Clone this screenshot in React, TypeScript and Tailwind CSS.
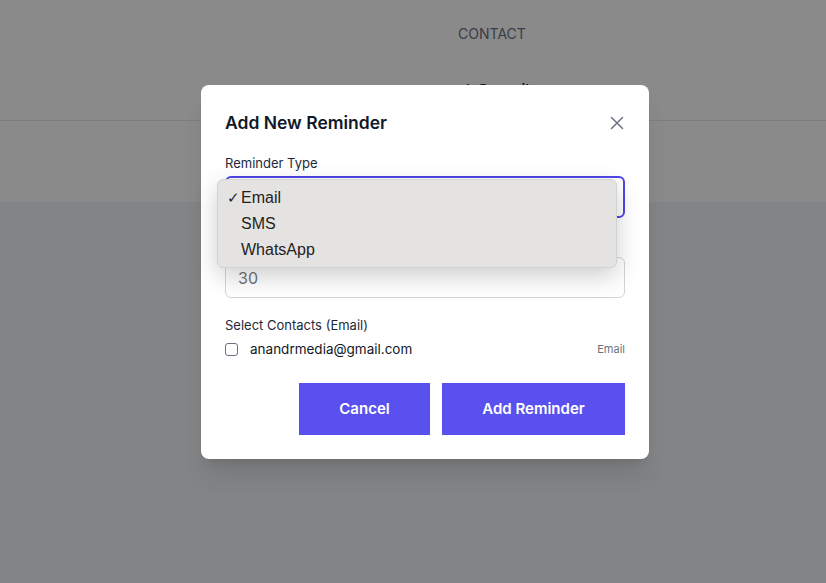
import React from 'react';

const font = { fontFamily: 'Inter, "Noto Sans", sans-serif' };

const App: React.FC = () => {
  return (
    <div className="relative w-[826px] h-[583px] overflow-hidden bg-gray-100" style={font}>
      {/* Underlying page */}
      <div className="bg-white">
        <div className="h-[121px] border-b border-gray-200 flex flex-col items-center">
          <div className="pt-[24px] pl-[158px] text-sm text-gray-500 uppercase">Contact</div>
          <div className="mt-[35px] pl-[164px] text-[15px] font-medium text-gray-900">anandr@gmail.com</div>
        </div>
        <div className="h-[81px]" />
      </div>

      {/* Overlay */}
      <div className="absolute inset-0 bg-black/[0.46] flex items-start justify-center pt-[85px] pl-[24px]">
        <div className="w-[448px] bg-white rounded-lg p-6 shadow-xl">
          {/* Header */}
          <div className="flex items-center justify-between mb-4">
            <h2 className="text-[17.5px] leading-7 font-semibold text-gray-900">Add New Reminder</h2>
            <button className="text-gray-500 w-4 h-4 flex items-center justify-center">
              <svg width="14" height="14" viewBox="0 0 14 14" fill="none" stroke="currentColor" strokeWidth="1.5" strokeLinecap="round">
                <path d="M1.5 1.5l11 11M12.5 1.5l-11 11" />
              </svg>
            </button>
          </div>

          {/* Reminder type */}
          <label className="block text-[13px] leading-5 text-gray-800 mb-[3px]">Reminder Type</label>
          <div className="relative mb-4">
            <div className="h-[42px] border-2 border-[#5046e5] rounded-md flex items-center justify-end px-3">
              <svg width="10" height="10" viewBox="0 0 10 10" fill="none" stroke="#555" strokeWidth="1.4">
                <path d="M1.5 3.5l3.5 3.5 3.5-3.5" />
              </svg>
            </div>
            {/* Native dropdown */}
            <div className="absolute left-[-8px] top-[3px] w-[400px] h-[89px] bg-[#e5e3e1] rounded-md border border-[#d4d2d0] shadow-[0_8px_24px_rgba(0,0,0,0.2)] py-[5px] text-base text-[#222]" style={{ fontFamily: '"Liberation Sans", Arial, sans-serif' }}>
              <div className="h-[26px] flex items-center relative pl-[23px]">
                <span className="absolute left-[9px] text-[15px]">✓</span>
                <span>Email</span>
              </div>
              <div className="h-[26px] flex items-center pl-[23px]">SMS</div>
              <div className="h-[26px] flex items-center pl-[23px]">WhatsApp</div>
            </div>
          </div>

          {/* Days before (label hidden behind the open dropdown) */}
          <div className="h-5 mb-[3px]" />
          <div className="h-[41px] border border-gray-300 rounded-md flex items-center px-3 text-base text-[#737373] mb-[17px]">
            30
          </div>

          {/* Contacts */}
          <label className="block text-[13px] leading-5 text-gray-800">Select Contacts (Email)</label>
          <div className="mt-1 h-5 flex items-center justify-between">
            <div className="flex items-center">
              <span className="w-[13px] h-[13px] border border-gray-500 rounded-[3px] bg-white" />
              <span className="ml-3 text-[13.5px] text-gray-900">anandrmedia@gmail.com</span>
            </div>
            <span className="text-[11px] text-gray-500">Email</span>
          </div>

          {/* Actions */}
          <div className="mt-6 flex justify-end gap-3">
            <button className="w-[131px] h-[52px] bg-[#5a50ef] text-white text-[15px] font-semibold">Cancel</button>
            <button className="w-[183px] h-[52px] bg-[#5a50ef] text-white text-[15px] font-semibold">Add Reminder</button>
          </div>
        </div>
      </div>
    </div>
  );
};

export default App;
